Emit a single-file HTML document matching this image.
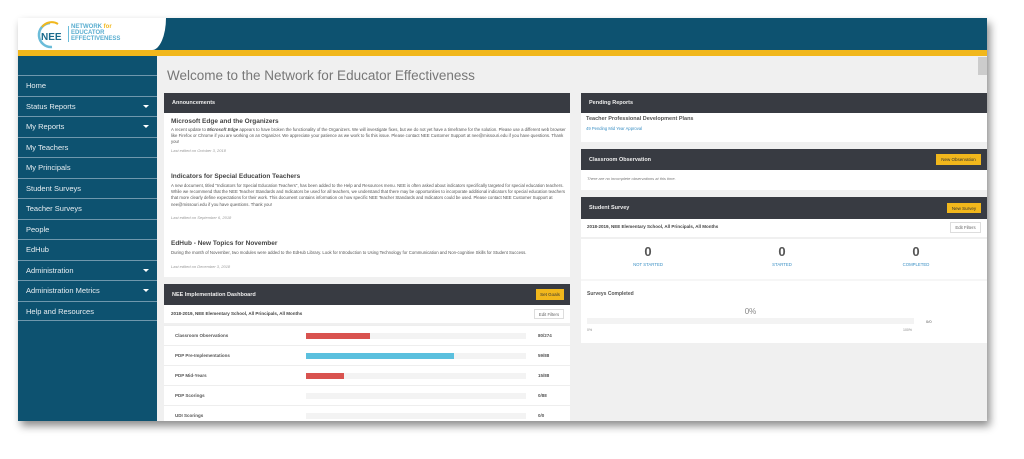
<!DOCTYPE html>
<html><head><meta charset="utf-8"><style>
*{margin:0;padding:0;box-sizing:border-box}
body{width:1024px;height:459px;background:#fff;font-family:"Liberation Sans",sans-serif;position:relative;overflow:hidden}
.a{position:absolute}
#win{left:18px;top:18px;width:969px;height:403px;background:#f0f0f0;box-shadow:3px 5px 8px rgba(0,0,0,.45);overflow:hidden}
.hd{background:#383b42;color:#eee;font-size:5.5px;font-weight:bold;padding-left:8px;display:flex;align-items:center}
.pn{background:#fff}
.nav{left:0;width:139px;height:20.5px;border-top:1px solid #6f98ad;color:#e8eef2;font-size:7.5px;padding-left:8px;line-height:19px}
.nav i{position:absolute;right:8px;top:8px;border:3px solid transparent;border-top:3px solid #fff;border-bottom:0}
.t{font-size:4.3px;color:#555;line-height:6.2px}
.h{font-size:6.5px;font-weight:bold;color:#444}
.e{font-size:4px;color:#999;font-style:italic}
.btn{background:#f1b71c;color:#333;font-size:4.5px;display:flex;align-items:center;justify-content:center}
.ef{background:#fff;border:1px solid #ddd;font-size:4.3px;color:#666;display:flex;align-items:center;justify-content:center}
.row{left:0;width:406px;height:20px;border-top:1px solid #eee;font-size:4.5px;font-weight:bold;color:#555}
.trk{background:#f3f3f3;height:6px;top:7px;left:142px;width:220px}
</style></head><body>
<div id="win" class="a">
 <div class="a" style="left:0;top:0;width:969px;height:32px;background:#0d5270"></div>
 <div class="a" style="left:0;top:0;width:148px;height:32px;background:#fff;border-radius:0 0 14px 0 / 0 0 32px 0"></div>
 <svg class="a" style="left:18px;top:3px" width="30" height="28" viewBox="0 0 30 28"><path d="M14 2 A12 12 0 1 0 16 26" fill="none" stroke="#6bbcd9" stroke-width="2.5"/><path d="M6 6 A12 12 0 0 1 22 3" fill="none" stroke="#f1b71c" stroke-width="2"/><text x="5" y="19" font-size="10" font-weight="bold" fill="#1a6a8c" font-family="Liberation Sans">NEE</text></svg>
 <div class="a" style="left:50px;top:8px;width:1px;height:16px;background:#6bbcd9"></div>
 <div class="a" style="left:53px;top:7px;font-size:6px;line-height:5.8px;color:#5aaed0;font-weight:bold">NETWORK <span style="color:#f1b71c">for</span><br>EDUCATOR<br>EFFECTIVENESS</div>
 <div class="a" style="left:0;top:32px;width:969px;height:6px;background:#f1b71c"></div>
 <div class="a" style="left:0;top:38px;width:139px;height:365px;background:#0d5270"></div>
 <div class="a nav" style="top:57px">Home</div>
 <div class="a nav" style="top:77.5px">Status Reports<i></i></div>
 <div class="a nav" style="top:98px">My Reports<i></i></div>
 <div class="a nav" style="top:118.5px">My Teachers</div>
 <div class="a nav" style="top:139px">My Principals</div>
 <div class="a nav" style="top:159.5px">Student Surveys</div>
 <div class="a nav" style="top:180px">Teacher Surveys</div>
 <div class="a nav" style="top:200.5px">People</div>
 <div class="a nav" style="top:221px">EdHub</div>
 <div class="a nav" style="top:241.5px">Administration<i></i></div>
 <div class="a nav" style="top:262px">Administration Metrics<i></i></div>
 <div class="a nav" style="top:282.5px;border-bottom:1px solid #6f98ad">Help and Resources</div>
 <div class="a" style="left:960px;top:39px;width:9px;height:18px;background:#ccc"></div>
 <div class="a" style="left:149px;top:50px;font-size:13.5px;color:#777">Welcome to the Network for Educator Effectiveness</div>

 <div class="a pn" style="left:146px;top:75px;width:406px;height:184px">
  <div class="hd" style="height:20px">Announcements</div>
  <div class="a h" style="left:7px;top:25px">Microsoft Edge and the Organizers</div>
  <div class="a t" style="left:7px;top:34px;width:395px">A recent update to <b><i>Microsoft Edge</i></b> appears to have broken the functionality of the Organizers. We will investigate fixes, but we do not yet have a timeframe for the solution. Please use a different web browser like Firefox or Chrome if you are working on an Organizer. We appreciate your patience as we work to fix this issue. Please contact NEE Customer Support at nee@missouri.edu if you have questions. Thank you!</div>
  <div class="a e" style="left:7px;top:55px">Last edited on October 3, 2018</div>
  <div class="a h" style="left:7px;top:80px">Indicators for Special Education Teachers</div>
  <div class="a t" style="left:7px;top:90px;width:395px">A new document, titled "Indicators for Special Education Teachers", has been added to the Help and Resources menu. NEE is often asked about indicators specifically targeted for special education teachers. While we recommend that the NEE Teacher Standards and Indicators be used for all teachers, we understand that there may be opportunities to incorporate additional indicators for special education teachers that more clearly define expectations for their work. This document contains information on how specific NEE Teacher Standards and Indicators could be used. Please contact NEE Customer Support at nee@missouri.edu if you have questions. Thank you!</div>
  <div class="a e" style="left:7px;top:122px">Last edited on September 6, 2018</div>
  <div class="a h" style="left:7px;top:147px">EdHub - New Topics for November</div>
  <div class="a t" style="left:7px;top:157px;width:398px">During the month of November, two modules were added to the EdHub Library. Look for Introduction to Using Technology for Communication and Non-cognitive Skills for Student Success.</div>
  <div class="a e" style="left:7px;top:171px">Last edited on December 3, 2018</div>
 </div>

 <div class="a pn" style="left:146px;top:266px;width:406px;height:140px">
  <div class="hd" style="height:21px">NEE Implementation Dashboard</div>
  <div class="a btn" style="left:372px;top:5px;width:28px;height:11px">Set Goals</div>
  <div class="a" style="left:7px;top:27px;font-size:4.5px;font-weight:bold;color:#444">2018-2019, NEE Elementary School, All Principals, All Months</div>
  <div class="a ef" style="left:370px;top:25px;width:30px;height:10px">Edit Filters</div>
  <div class="a" style="left:0;top:39px;width:406px;height:2px;background:#f0f0f0"></div>
  <div class="a row" style="top:41px"><span class="a" style="left:11px;top:7px">Classroom Observations</span><div class="a trk"></div><div class="a trk" style="width:64px;background:#d9534f"></div><span class="a" style="left:374px;top:7px">80/274</span></div>
  <div class="a row" style="top:61px"><span class="a" style="left:11px;top:7px">PDP Pre-Implementations</span><div class="a trk"></div><div class="a trk" style="width:148px;background:#5bc0de"></div><span class="a" style="left:374px;top:7px">59/88</span></div>
  <div class="a row" style="top:81px"><span class="a" style="left:11px;top:7px">PDP Mid-Years</span><div class="a trk"></div><div class="a trk" style="width:38px;background:#d9534f"></div><span class="a" style="left:374px;top:7px">15/88</span></div>
  <div class="a row" style="top:101px"><span class="a" style="left:11px;top:7px">PDP Scorings</span><div class="a trk"></div><span class="a" style="left:374px;top:7px">0/88</span></div>
  <div class="a row" style="top:121px"><span class="a" style="left:11px;top:7px">UDI Scorings</span><div class="a trk"></div><span class="a" style="left:374px;top:7px">0/0</span></div>
 </div>

 <div class="a pn" style="left:563px;top:75px;width:406px;height:49px">
  <div class="hd" style="height:20px">Pending Reports</div>
  <div class="a" style="left:5px;top:23px;font-size:5.5px;font-weight:bold;color:#555">Teacher Professional Development Plans</div>
  <div class="a" style="left:5px;top:33px;font-size:4.2px;color:#3a8fc4">49 Pending Mid Year Approval</div>
 </div>
 <div class="a pn" style="left:563px;top:131px;width:406px;height:41px">
  <div class="hd" style="height:21px">Classroom Observation</div>
  <div class="a btn" style="left:355px;top:5px;width:45px;height:11px">New Observation</div>
  <div class="a e" style="left:6px;top:27px;color:#777">There are no incomplete observations at this time.</div>
 </div>
 <div class="a pn" style="left:563px;top:179px;width:406px;height:146px">
  <div class="hd" style="height:22px">Student Survey</div>
  <div class="a btn" style="left:366px;top:6px;width:34px;height:10px">New Survey</div>
  <div class="a" style="left:6px;top:27px;font-size:4.5px;font-weight:bold;color:#444">2018-2019, NEE Elementary School, All Principals, All Months</div>
  <div class="a ef" style="left:369px;top:25px;width:31px;height:11px">Edit Filters</div>
  <div class="a" style="left:0;top:40px;width:406px;height:2px;background:#f0f0f0"></div>
  <div class="a" style="left:0;top:47px;width:134px;text-align:center;font-size:13px;font-weight:bold;color:#555">0</div>
  <div class="a" style="left:134px;top:47px;width:134px;text-align:center;font-size:13px;font-weight:bold;color:#555">0</div>
  <div class="a" style="left:268px;top:47px;width:134px;text-align:center;font-size:13px;font-weight:bold;color:#555">0</div>
  <div class="a" style="left:0;top:65px;width:134px;text-align:center;font-size:4.3px;color:#3a8fc4">NOT STARTED</div>
  <div class="a" style="left:134px;top:65px;width:134px;text-align:center;font-size:4.3px;color:#3a8fc4">STARTED</div>
  <div class="a" style="left:268px;top:65px;width:134px;text-align:center;font-size:4.3px;color:#3a8fc4">COMPLETED</div>
  <div class="a" style="left:0;top:82px;width:406px;height:2px;background:#f6f6f6"></div>
  <div class="a" style="left:6px;top:94px;font-size:5px;font-weight:bold;color:#555">Surveys Completed</div>
  <div class="a" style="left:6px;top:110px;width:327px;text-align:center;font-size:8px;color:#888">0%</div>
  <div class="a" style="left:6px;top:121px;width:327px;height:6px;background:#f3f3f3"></div>
  <div class="a" style="left:345px;top:122px;font-size:4px;color:#555">0/0</div>
  <div class="a" style="left:6px;top:131px;font-size:3.5px;color:#888">0%</div>
  <div class="a" style="left:322px;top:131px;font-size:3.5px;color:#888">100%</div>
 </div>
</div>
</body></html>
